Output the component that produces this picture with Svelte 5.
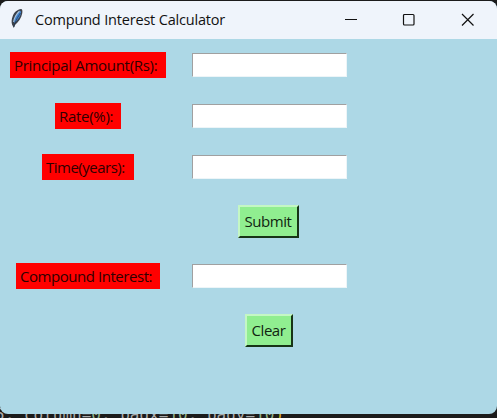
<script>
  let principal = $state('');
  let rate = $state('');
  let time = $state('');
  let interest = $state('');

  function submit() {
    const p = +principal;
    interest = (p * (1 + +rate / 100) ** +time - p).toFixed(2);
  }
  function clear() {
    principal = rate = time = interest = '';
  }
</script>

<div class="screen">
  <div class="window">
    <header>
      <svg class="feather" width="16" height="22" viewBox="0 0 16 22">
        <path d="M12 1C8.500 1.500 5 4 3.600 8.500c-1 3-1.300 5-.6 8L4.800 20l1.200-3C9.500 14 12.500 10 13.300 5c.4-2.500-.1-4-1.300-4z" fill="#3b414b" />
        <path d="M11.800 2.800C8.500 4.500 6 8 5.300 12l-.3 3.300C8 13 11.300 9 12 5z" fill="#3f83cf" />
        <path d="M10.500 3C7.500 6 5.300 9.500 4.600 14" fill="none" stroke="#a9c3dc" stroke-width="1.100" />
        <path d="M11.500 5C9 9 6.500 12 4.900 19" fill="none" stroke="#26364c" stroke-width=".7" />
      </svg>
      <h1>Compund Interest Calculator</h1>
      <svg class="controls" width="130" height="14" viewBox="0 0 130 14" fill="none" stroke="#111" stroke-width="1.200">
        <path d="M1 6.500h12" />
        <rect x="59.500" y="1.500" width="10.500" height="10.500" rx="1" />
        <path d="M118 1l11.500 11.500M129.500 1L118 12.500" />
      </svg>
    </header>
    <main>
      <div class="row"><div class="cell"><label class="l1" for="p">Principal Amount(Rs):</label></div><div class="cell field"><input id="p" bind:value={principal} /></div></div>
      <div class="row"><div class="cell"><label class="l2" for="r">Rate(%):</label></div><div class="cell field"><input id="r" bind:value={rate} /></div></div>
      <div class="row"><div class="cell"><label class="l3" for="t">Time(years):</label></div><div class="cell field"><input id="t" bind:value={time} /></div></div>
      <div class="row action"><button class="submit" onclick={submit}>Submit</button></div>
      <div class="row"><div class="cell"><label class="l4" for="i">Compound Interest:</label></div><div class="cell field"><input id="i" bind:value={interest} /></div></div>
      <div class="row action"><button class="clear" onclick={clear}>Clear</button></div>
    </main>
  </div>
  <pre>5, column=<b>0</b>, padx=<b>10</b>, pady=<b>10</b><i>)</i></pre>
</div>

<style>
  .screen {
    width: 497px;
    height: 418px;
    overflow: hidden;
    background: #1b1b1b;
    box-sizing: border-box;
    padding-top: 1px;
    font-family: 'Open Sans', 'Noto Sans', sans-serif;
    color: #111;
  }
  .window {
    height: 413px;
    border-radius: 8px;
    overflow: hidden;
    background: #add8e6;
  }
  header {
    height: 38px;
    background: #eff4fb;
    display: flex;
    align-items: center;
  }
  .feather { margin: 0 0 2px 9px; }
  h1 {
    font-size: 14.500px;
    font-weight: 400;
    margin: 0 0 2px 10px;
    letter-spacing: -0.18px;
    white-space: nowrap;
  }
  .controls { margin-left: auto; margin-right: 23px; }
  .row { display: flex; height: 51.400px; align-items: center; }
  .cell { width: 176px; display: flex; justify-content: center; }
  .cell.field { width: 186px; }
  label {
    box-sizing: border-box;
    height: 26px;
    background: #f00;
    padding-left: 4px;
    font-size: 15px;
    line-height: 26px;
    letter-spacing: -0.3px;
    white-space: nowrap;
    color: #300000;
  }
  .l1 { width: 156px; }
  .l2 { width: 66px; }
  .l3 { width: 92px; letter-spacing: -0.5px; }
  .l4 { width: 144px; letter-spacing: -0.45px; }
  input {
    box-sizing: border-box;
    width: 155px;
    height: 24px;
    margin: 0;
    padding: 1px 3px;
    outline: none;
    background: #fff;
    border: 1px solid;
    border-color: #a0a0a0 #edf5f8 #edf5f8 #a0a0a0;
    border-radius: 0;
    font: 14px 'Open Sans', sans-serif;
  }
  .action { height: 57.400px; padding-left: 177px; }
  button {
    box-sizing: border-box;
    height: 33px;
    padding: 0 1px 0 0;
    background: #90ee90;
    border: 2px solid;
    border-color: #c4f7c4 #173417 #173417 #c4f7c4;
    border-radius: 0;
    font: 15px/27px 'Open Sans', sans-serif;
    letter-spacing: -0.45px;
    color: #102510;
    white-space: nowrap;
  }
  .submit { width: 61px; margin-left: 61px; }
  .clear { width: 48px; margin-left: 68px; }
  pre {
    margin: 0 0 0 -5px;
    height: 4px;
    font: 16px/2px 'DejaVu Sans Mono', monospace;
    color: #aaa;
  }
  pre b { font-weight: 400; color: #8fae86; }
  pre i { font-style: normal; color: #d8b020; }
  .window { position: relative; z-index: 1; }
</style>
